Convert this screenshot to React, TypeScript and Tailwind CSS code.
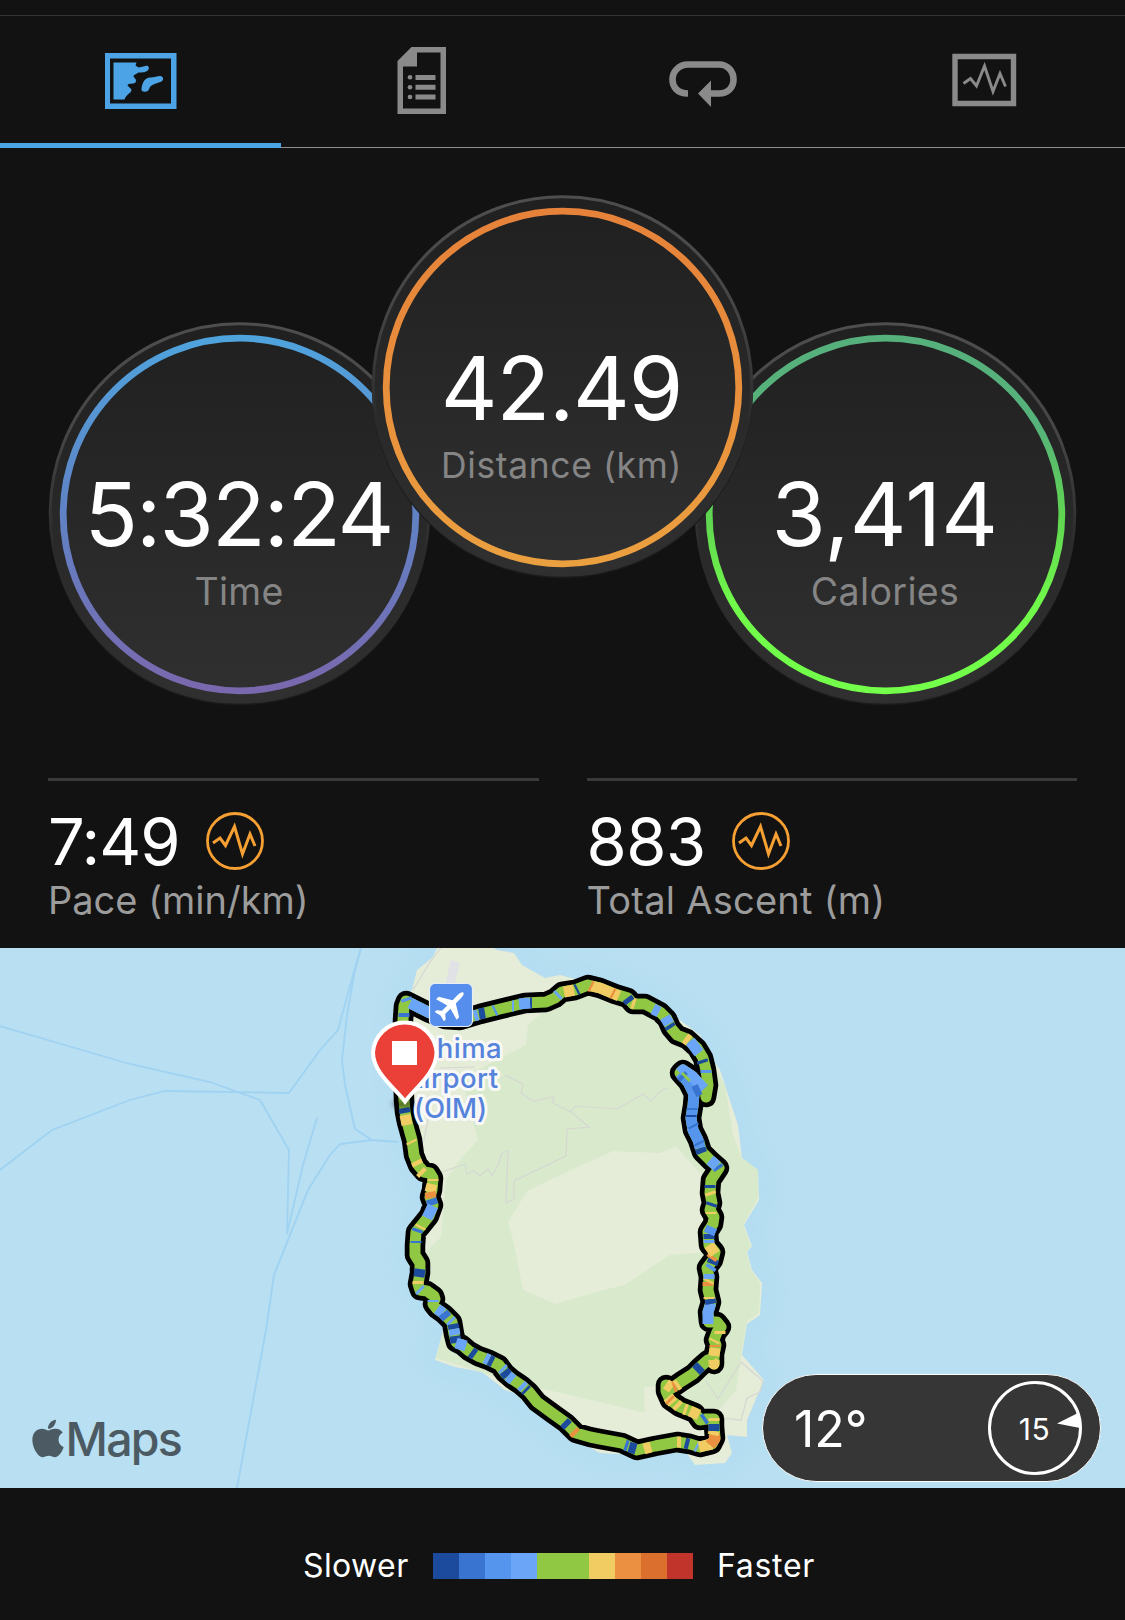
import type { ReactNode } from "react";
import { FaApple } from "react-icons/fa";

const C = {
  n: "#1c4a9c",
  m: "#3974d0",
  l: "#5595ee",
  b: "#6aa5f8",
  g: "#91c843",
  y: "#f1cc62",
  o: "#eb8f40",
};

const ROUTE =
  "404,1100 405,1112 407,1122 412,1140 414,1155 418,1165 424,1172 430,1173 433,1178 432,1190 430,1197 433,1205 429,1216 421,1226 416,1232 415,1245 415,1255 420,1263 420,1273 418,1284 420,1290 427,1291 434,1296 435,1299 433,1304 437,1309 444,1314 452,1322 454,1334 456,1342 462,1345 469,1351 478,1356 489,1360 499,1365 505,1373 512,1379 521,1385 529,1392 537,1402 552,1413 566,1423 576,1433 590,1437 600,1439 622,1443 637,1450 655,1446 677,1442 690,1444 700,1447 712,1444 715,1438 714,1426 714,1419 706,1419 700,1420 695,1413 680,1407 670,1400 666,1391 666,1385 672,1388 682,1381 693,1374 700,1367 708,1360 714,1364 714,1354 716,1345 714,1340 717,1332 721,1327 717,1322 709,1322 708,1312 711,1302 708,1290 709,1277 707,1268 713,1260 715,1252 709,1245 708,1232 713,1224 714,1217 710,1210 712,1203 710,1193 711,1180 715,1174 719,1168 711,1161 702,1152 698,1140 693,1130 691,1118 693,1106 694,1094 688,1082 680,1073 683,1070 692,1076 705,1090 706,1097 708,1085 706,1070 703,1058 697,1048 687,1039 677,1035 671,1028 667,1019 660,1012 645,1004 633,1004 628,998 615,994 600,988 588,985 575,990 562,992 555,998 546,1002 525,1003 500,1009 480,1014 460,1020 445,1019 430,1013 418,1007 406,1001 404,1006 403,1020 403,1060 404,1100";

// Pace bands laid over the green base line: colour followed by the points they span.
const BANDS: [string, string][] = [
  [C.b, "410,1003 418,1007 430,1013 445,1019"],
  [C.m, "404,1013 404,1017"],
  [C.l, "406,998 407,1001"],
  [C.n, "404,1108 405,1113"],
  [C.y, "405,1115 407,1125"],
  [C.y, "411,1141 412,1143"],
  [C.y, "416,1161 418,1165"],
  [C.y, "420,1171 423,1174"],
  [C.y, "433,1179 433,1181"],
  [C.y, "432,1184 430,1192"],
  [C.o, "430,1192 431,1198"],
  [C.m, "431,1199 433,1205"],
  [C.b, "433,1206 427,1218"],
  [C.y, "421,1226 420,1228"],
  [C.m, "418,1229 417,1232"],
  [C.m, "416,1241 416,1243"],
  [C.n, "420,1269 419,1277"],
  [C.y, "418,1281 418,1284"],
  [C.b, "419,1289 421,1291"],
  [C.b, "433,1300 433,1302"],
  [C.b, "437,1309 443,1313"],
  [C.m, "443,1313 447,1318"],
  [C.b, "450,1320 452,1322"],
  [C.n, "453,1324 454,1329"],
  [C.b, "454,1329 455,1335"],
  [C.n, "455,1336 456,1343"],
  [C.b, "456,1343 466,1346"],
  [C.n, "471,1352 475,1355"],
  [C.b, "485,1358 489,1360"],
  [C.n, "489,1360 493,1362"],
  [C.b, "502,1368 504,1370"],
  [C.n, "504,1371 508,1376"],
  [C.b, "508,1376 513,1380"],
  [C.b, "521,1385 524,1388"],
  [C.n, "525,1389 527,1391"],
  [C.n, "564,1422 568,1426"],
  [C.o, "573,1431 576,1434"],
  [C.m, "625,1445 628,1446"],
  [C.n, "629,1447 636,1449"],
  [C.y, "644,1449 651,1447"],
  [C.y, "677,1442 681,1442"],
  [C.n, "685,1443 689,1444"],
  [C.b, "696,1446 698,1447"],
  [C.y, "699,1447 707,1445 712,1444"],
  [C.o, "710,1445 715,1439 714,1434"],
  [C.y, "713,1435 714,1431"],
  [C.n, "714,1431 714,1424"],
  [C.y, "714,1421 714,1418"],
  [C.m, "706,1418 703,1420"],
  [C.y, "699,1415 690,1411"],
  [C.y, "687,1410 684,1409"],
  [C.y, "679,1407 676,1404"],
  [C.y, "673,1403 668,1397"],
  [C.o, "669,1399 671,1401"],
  [C.y, "666,1384 672,1388"],
  [C.o, "673,1387 676,1386"],
  [C.y, "676,1386 679,1384"],
  [C.n, "696,1371 701,1366"],
  [C.y, "712,1362 714,1364 714,1360"],
  [C.y, "714,1356 715,1348"],
  [C.o, "715,1347 715,1345"],
  [C.y, "714,1342 715,1340"],
  [C.y, "720,1334 720,1331"],
  [C.b, "708,1324 708,1312 711,1303"],
  [C.n, "711,1304 710,1299"],
  [C.y, "709,1299 709,1297"],
  [C.o, "708,1286 708,1282"],
  [C.y, "708,1282 709,1280"],
  [C.b, "709,1279 709,1274"],
  [C.l, "710,1269 712,1266"],
  [C.n, "712,1264 714,1259"],
  [C.o, "711,1259 713,1256"],
  [C.y, "715,1254 709,1245"],
  [C.b, "709,1243 709,1240"],
  [C.n, "709,1239 709,1234"],
  [C.l, "709,1234 712,1227"],
  [C.y, "711,1214 711,1212"],
  [C.n, "711,1206 712,1203"],
  [C.y, "711,1195 710,1192"],
  [C.n, "710,1188 710,1185"],
  [C.m, "719,1169 717,1166"],
  [C.b, "717,1166 710,1160"],
  [C.n, "702,1153 700,1148"],
  [C.l, "700,1148 698,1140 693,1130 691,1118 693,1106 694,1094"],
  [C.l, "694,1094 688,1082 680,1073"],
  [C.b, "680,1073 683,1070 692,1076 704,1089"],
  [C.m, "694,1092 700,1089"],
  [C.m, "700,1144 699,1142"],
  [C.m, "694,1127 693,1125"],
  [C.n, "691,1117 691,1115"],
  [C.m, "692,1110 692,1108"],
  [C.m, "681,1075 684,1078"],
  [C.g, "685,1078 687,1076"],
  [C.l, "706,1073 706,1070"],
  [C.n, "703,1063 702,1060"],
  [C.b, "699,1053 690,1041"],
  [C.y, "689,1041 685,1038"],
  [C.n, "671,1028 669,1025"],
  [C.b, "669,1024 665,1017"],
  [C.b, "659,1012 653,1009"],
  [C.y, "635,1004 632,1003"],
  [C.n, "630,1002 627,998"],
  [C.y, "619,996 600,988 591,986"],
  [C.o, "614,994 612,993"],
  [C.o, "592,987 590,986"],
  [C.n, "578,989 576,990"],
  [C.y, "574,990 564,992"],
  [C.b, "559,994 557,996"],
  [C.n, "532,1003 530,1003"],
  [C.b, "530,1003 519,1004"],
  [C.b, "514,1006 512,1006"],
  [C.l, "496,1010 494,1011"],
  [C.n, "485,1013 479,1014"],
  [C.b, "478,1015 474,1016"],
];

function TabMap() {
  return (
    <svg width="73" height="58" viewBox="104.500 51.500 73 58" fill="#4ca3e6">
      <path fillRule="evenodd" d="M105.500 52.500h71.500v56H105.500zM110.500 58v45h61V58z" />
      <path d="M114 62h23l-1 3 3 2 5-1c5-2 6 1 5 3-2 3-6 3-10 3l-5 3c0 3 4 3 2 7-2 2-7 0-8 3l4 4c0 4-5 4-7 10h-11z" />
      <path d="M142 88c1-6 3-11 9-11 4 0 8-2 10-1.500 4 1 3 5 0 6-5 1.500-10 3-11 6-1 4-4 4-6 3.500-2 0-2-2-2-3z" />
    </svg>
  );
}

function TabDetails() {
  return (
    <svg width="50" height="69" viewBox="397 46 50 69" fill="#8a8a8a">
      <path fillRule="evenodd" d="M411.500 47h34.500v67H397.500V61zM417 52.500V66.500H403V108.500h37.500V52.500z" />
      <path d="M415.500 75h20v5h-20zM415.500 84.700h20v5h-20zM415.500 94.600h20v5h-20z" />
      <circle cx="410" cy="77.300" r="2.300" />
      <circle cx="410" cy="87.200" r="2.300" />
      <circle cx="410" cy="97" r="2.300" />
    </svg>
  );
}

function TabLaps() {
  return (
    <svg className="mt-[8px]" width="70" height="50" viewBox="668 60 70 50" fill="none">
      <path d="M688 94.500C677 94.500 672.500 87.500 672.500 80.500C672.500 72.500 679 65.500 688 65.500H719C728 65.500 733.500 72.500 733.500 80.500C733.500 88.500 728 94.500 719 94.500H708" stroke="#8a8a8a" strokeWidth="6.600" />
      <path d="M698 94.500L711 81.500V108z" fill="#8a8a8a" />
    </svg>
  );
}

function TabChart() {
  return (
    <svg width="66" height="54" viewBox="951 53.500 66 54" fill="none" stroke="#8a8a8a">
      <path d="M955 57h58.500v47H955z" strokeWidth="5.400" />
      <path d="M963.500 84l7-5 6 7.500 8-20 8.500 25.500 7-18 5.500 13" strokeWidth="2.900" />
    </svg>
  );
}

function Tab({ children, active }: { children: ReactNode; active?: boolean }) {
  return (
    <button
      className={
        active
          ? "flex flex-1 items-center justify-center border-b-[5px] border-[#4ca3e6] pt-[2px]"
          : "flex flex-1 items-center justify-center border-b border-[#8f8f8f] pb-[3px]"
      }
    >
      {children}
    </button>
  );
}

function Dial(props: {
  id: string;
  value: string;
  label: string;
  stops: string[];
  className: string;
  valueClass: string;
  labelClass: string;
}) {
  const { id, value, label, stops, className, valueClass, labelClass } = props;
  return (
    <div className={`relative flex h-[382px] w-[382px] shrink-0 flex-col items-center ${className}`}>
      <svg className="absolute inset-0 overflow-visible" width="382" height="382" viewBox="0 0 382 382">
        <defs>
          <linearGradient id={`${id}-ring`} x1="0" y1="0" x2="0" y2="1">
            {stops.map((s, i) => (
              <stop key={i} offset={i / (stops.length - 1)} stopColor={s} />
            ))}
          </linearGradient>
          <linearGradient id={`${id}-face`} x1="0" y1="0" x2="0" y2="1">
            <stop offset="0" stopColor="#202020" />
            <stop offset="1" stopColor="#303030" />
          </linearGradient>
          <linearGradient id={`${id}-rim`} x1="0" y1="0" x2="0" y2="1">
            <stop offset="0" stopColor="#4e4e4e" />
            <stop offset="0.300" stopColor="#454545" />
            <stop offset="0.600" stopColor="#2a2a2a" />
            <stop offset="1" stopColor="#2f2f2f" />
          </linearGradient>
        </defs>
        <circle cx="191.500" cy="192" r="190.500" fill="#1a1a1a" />
        <circle cx="191.500" cy="190" r="189.300" fill={`url(#${id}-face)`} stroke={`url(#${id}-rim)`} strokeWidth="3" />
        <circle cx="191.500" cy="191.500" r="176.300" fill="none" stroke={`url(#${id}-ring)`} strokeWidth="6.800" />
      </svg>
      <div className={`relative mt-[143px] whitespace-nowrap text-[88px] leading-[96px] text-white ${valueClass}`}>{value}</div>
      <div className={`relative mt-[9px] whitespace-nowrap leading-[40px] text-[#858585] ${labelClass}`}>{label}</div>
    </div>
  );
}

function PulseBadge() {
  return (
    <svg width="58" height="58" viewBox="0 0 58 58" fill="none" stroke="#f6a033">
      <circle cx="29" cy="29" r="27.500" strokeWidth="2.800" />
      <path d="M7 31l7-5 5.500 7.500 9-19 8 27.500 7.500-20 5 12" strokeWidth="3" />
    </svg>
  );
}

function Stat(props: { value: string; label: string; valueClass: string; labelClass: string }) {
  return (
    <div className="flex-1 border-t-[3px] border-[#3a3a3a] pt-[28px]">
      <div className="flex h-[64px] items-center">
        <span className={`pt-px text-[65px] leading-[64px] text-white ${props.valueClass}`}>{props.value}</span>
        <PulseBadge />
      </div>
      <div className={`mt-[7px] whitespace-nowrap text-[38px] leading-[40px] text-[#9c9c9c] ${props.labelClass}`}>{props.label}</div>
    </div>
  );
}

const LAND =
  "M437 948L433 957 417 970 412 990 402 1003 402 1100 410 1150 422 1180 424 1210 414 1235 414 1280 430 1300 446 1320 435 1360 455 1367 482 1372 505 1390 515 1393 535 1413 570 1437 600 1453 640 1455 686 1452 695 1465 725 1463 732 1453 727 1435 747 1437 747 1420 764 1380 742 1355 747 1324 760 1315 762 1283 752 1270 747 1252 752 1246 744 1225 759 1200 758 1170 742 1158 738 1125 720 1070 713 1060 700 1035 660 1005 600 980 575 979 560 975 545 978 522 965 514 953 497 950 480 940 440 940Z";

function MapDrawing() {
  return (
    <svg className="block" width="1125" height="540" viewBox="0 948 1125 540" fill="none">
      <defs>
        <filter id="shore" x="-20%" y="-20%" width="140%" height="140%">
          <feGaussianBlur stdDeviation="12" />
        </filter>
        <filter id="soft" x="-50%" y="-100%" width="200%" height="300%">
          <feGaussianBlur stdDeviation="2.500" />
        </filter>
      </defs>
      <rect x="0" y="948" width="1125" height="540" fill="#b8dff2" />
      <path d={LAND} stroke="#a5d5ec" strokeWidth="16" opacity="0.300" filter="url(#shore)" />
      <g stroke="#a0d2f1" strokeWidth="1.800">
        <path d="M361 948L355 970 347 1015 342 1060 345 1085 355 1129 372 1140 398 1142" />
        <path d="M361 948L353 975 338 1030 320 1050 289 1093 165 1091 130 1100 52 1130 0 1170" />
        <path d="M0 1026L130 1064 210 1082 260 1100 289 1150 287 1234 303 1165 317 1118" />
        <path d="M372 1140L340 1144 330 1155 308 1190 274 1275 266 1330 237 1488" />
      </g>
      <path d={LAND} fill="#e5ecd8" />
      <path d="M546 1010L600 985 660 1008 700 1045 716 1070 725 1085 733 1135 742 1158 758 1170 758 1198 743 1225 751 1246 746 1252 751 1270 760 1283 759 1313 747 1321 741 1355 736 1390 717 1412 690 1415 645 1413 644 1387 660 1387 655 1418 600 1402 540 1388 500 1378 436 1358 446 1320 422 1290 418 1260 441 1237 446 1180 460 1160 478 1140 470 1110 462 1078 526 1045 528 1025Z" fill="#d8e9cc" />
      <path d="M644 1387L668 1385 700 1415 717 1412 727 1440 645 1445 600 1430V1402L645 1413Z" fill="#e5ecd8" />
      <path d="M508 1222L527 1191 560 1175 613 1151 660 1153 676 1146 700 1173 715 1195 712 1252 670 1255 625 1285 600 1291 555 1304 523 1290 513 1240Z" fill="#e5ecd8" />
      <path d="M451 960l9 3-7 27h-9z" fill="#e0e2e6" />
      <g stroke="#d5d8d2" strokeWidth="1.200">
        <path d="M441 948L430 962 413 990M442 1172L465 1164 467 1174 474 1171 480 1176 488 1169 492 1176 498 1165 502 1153 508 1151 506 1203 514 1199 514 1181 566 1156 567 1129 589 1127 571 1112 575 1106 617 1109 643 1094 651 1101 662 1090 668 1088M571 1112L553 1103 553 1097 533 1101 521 1093 523 1084 505 1075M440 1068L475 1067M424 1140L430 1110" />
        <path d="M706 1381L718 1399 741 1362 763 1381 760 1392 747 1398 741 1420 722 1418" />
      </g>
      <polyline points={ROUTE} stroke="#000" strokeWidth="20.500" strokeLinejoin="round" strokeLinecap="round" />
      <polyline points={ROUTE} stroke={C.g} strokeWidth="11" strokeLinejoin="round" strokeLinecap="round" />
      {BANDS.map(([color, points], i) => (
        <polyline key={i} points={points} stroke={color} strokeWidth="11" strokeLinejoin="round" />
      ))}
      <text
        x="451"
        y="1058"
        fill="#5583dc"
        stroke="#f8f9f6"
        strokeWidth="6"
        strokeLinejoin="round"
        paintOrder="stroke"
        textAnchor="middle"
        className="text-[27.500px] font-medium tracking-[0.500px]"
      >
        Oshima
        <tspan x="451" dy="30">Airport</tspan>
        <tspan x="450.500" dy="30" className="tracking-[-0.200px]">(OIM)</tspan>
      </text>
      <rect x="429.500" y="983.500" width="43" height="43" rx="5.500" fill="#558eed" stroke="#e9eef5" strokeWidth="1.200" />
      <g transform="translate(451 1005) rotate(45)">
        <path fill="#fff" d="M0-17.500C1.800-17.500 2.300-14 2.300-11V-4.500L14.500 3V6.500L2.300 3V10.500L6.500 14V16.500L0 14.800-6.500 16.500V14L-2.300 10.500V3L-14.500 6.500V3L-2.300-4.500V-11C-2.300-14-1.800-17.500 0-17.500Z" />
      </g>
      <ellipse cx="403" cy="1104" rx="11" ry="4" fill="#000" opacity="0.450" filter="url(#soft)" />
      <path d="M405 1101.500C396 1089 373 1073 373 1052.500A31.800 31.800 0 0 1 436.500 1052.500C436.500 1073 414 1089 405 1101.500Z" fill="#eb4037" stroke="#fff" strokeWidth="4" />
      <rect x="392" y="1041" width="25" height="24" fill="#fff" />
    </svg>
  );
}

function WeatherPill() {
  return (
    <div className="absolute bottom-[6px] right-[24px] flex h-[108px] w-[339px] items-center justify-between rounded-full border-[1.500px] border-white bg-[#363636] pl-[31px] pr-[18px] text-white">
      <span className="pt-[2px] text-[50px] leading-none">12°</span>
      <div className="relative flex h-[94px] w-[94px] items-center justify-center">
        <svg className="absolute inset-0" width="94" height="94" viewBox="0 0 94 94">
          <circle cx="47" cy="47" r="45.500" fill="none" stroke="#fff" strokeWidth="3" />
          <path d="M69 42.500L90 32 92 47z" fill="#fff" />
        </svg>
        <span className="pr-[1px] pt-px text-[30px] leading-none tracking-[0.500px]">15</span>
      </div>
    </div>
  );
}

const LEGEND = [
  "bg-[#1c4a9c]",
  "bg-[#3974d0]",
  "bg-[#5595ee]",
  "bg-[#6aa5f8]",
  "bg-[#91c843]",
  "bg-[#91c843]",
  "bg-[#f1cc62]",
  "bg-[#eb8f40]",
  "bg-[#db6f2d]",
  "bg-[#c1342c]",
];

export default function App() {
  return (
    <main className="flex h-[1620px] w-[1125px] flex-col overflow-hidden bg-[#121212] font-['Inter',sans-serif]">
      <nav className="mt-[15px] flex h-[133px] shrink-0 border-t border-[#343434]">
        <Tab active>
          <TabMap />
        </Tab>
        <Tab>
          <TabDetails />
        </Tab>
        <Tab>
          <TabLaps />
        </Tab>
        <Tab>
          <TabChart />
        </Tab>
      </nav>

      <section className="flex h-[630px] shrink-0 items-start pl-[48px] pt-[48px]">
        <Dial id="time" value="5:32:24" label="Time" stops={["#4fa3dd", "#6082c4", "#7a68ae"]} className="mt-[127px]" valueClass="right-[0.500px] tracking-[-1.900px]" labelClass="pt-px text-[37.500px] tracking-[0.300px]" />
        <Dial id="distance" value="42.49" label="Distance (km)" stops={["#e6823a", "#e88f3c", "#eba040"]} className="z-10 -ml-[59.500px]" valueClass="top-[1px] tracking-[-1.200px]" labelClass="pt-[2px] text-[35.500px] tracking-[0.600px]" />
        <Dial id="calories" value="3,414" label="Calories" stops={["#56b07c", "#56b27a", "#60d452", "#70f84a", "#73ff4a"]} className="-ml-[58.500px] mt-[127px]" valueClass="tracking-[0.300px]" labelClass="pt-px text-[37.500px] tracking-[0.400px]" />
      </section>

      <section className="flex h-[170px] shrink-0 gap-[48px] px-[48px]">
        <Stat value="7:49" label="Pace (min/km)" valueClass="mr-[26px] tracking-[-1px]" labelClass="tracking-[0px]" />
        <Stat value="883" label="Total Ascent (m)" valueClass="mr-[26px] tracking-[-0.500px]" labelClass="tracking-[0.250px]" />
      </section>

      <section className="relative h-[540px] shrink-0">
        <MapDrawing />
        <div className="absolute bottom-[22px] left-[31.500px] flex items-center text-[#4c5a63]">
          <FaApple className="mb-[2px] h-[43px] w-[32px]" />
          <span className="ml-[2px] text-[46.500px] font-medium leading-[54px] tracking-[-1.800px]">Maps</span>
        </div>
        <WeatherPill />
      </section>

      <footer className="flex flex-1 items-center pl-[303px] pt-[24px] text-[32px] leading-[40px] text-white">
        <span className="w-[130px] tracking-[0.400px]">Slower</span>
        <div className="flex h-[26px] w-[260px]">
          {LEGEND.map((c, i) => (
            <div key={i} className={`flex-1 ${c}`} />
          ))}
        </div>
        <span className="ml-[24px] tracking-[0.700px]">Faster</span>
      </footer>
    </main>
  );
}
